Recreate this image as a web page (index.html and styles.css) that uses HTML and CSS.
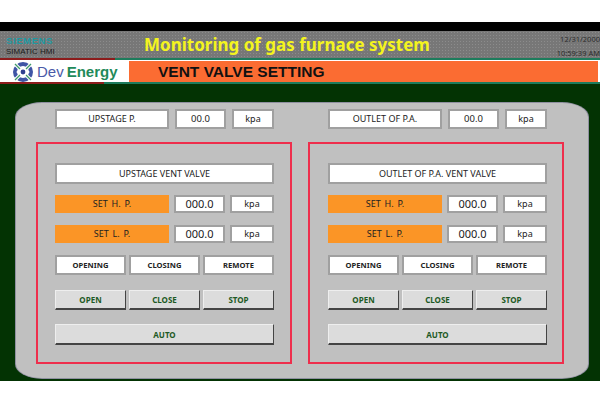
FILE: index.html
```html
<!DOCTYPE html>
<html lang="en">
<head>
  <meta charset="UTF-8">
  <title>Vent Valve Setting</title>
  <link rel="stylesheet" href="styles.css">
</head>
<body>
  <div class="screen">
    <div class="black-bar"></div>
    <div class="header">
      <div class="brand">
        <div class="siemens">SIEMENS</div>
        <div class="simatic">SIMATIC HMI</div>
      </div>
      <div class="title">Monitoring of gas furnace system</div>
      <div class="clock">
        <div>12/31/2000</div>
        <div>10:59:39 AM</div>
      </div>
    </div>
    <div class="rule rule-top"></div>
    <div class="nav">
      <div class="logo">
        <svg class="logo-icon" width="22" height="20" viewBox="0 0 22 20">
          <circle cx="11" cy="10" r="8" fill="none" stroke="#3f55a5" stroke-width="4"/>
          <path d="M2 1 L20 19 M20 1 L2 19" stroke="#fff" stroke-width="3.4"/>
          <path d="M3 2 L8 7 M19 2 L14 7 M3 18 L8 13 M19 18 L14 13" stroke="#3f9a6a" stroke-width="1.3"/>
          <circle cx="11" cy="10" r="2.4" fill="#2f3f8f"/>
          <circle cx="5.5" cy="10" r="1" fill="#fff"/>
          <circle cx="16.5" cy="10" r="1" fill="#fff"/>
        </svg>
        <span class="dev">Dev</span>
        <span class="energy">Energy</span>
      </div>
      <div class="page-name">VENT VALVE SETTING</div>
    </div>
    <div class="rule rule-bottom"></div>
    <div class="main">
      <div class="panel">
        <div class="summary-row">
          <div class="summary">
            <div class="field">UPSTAGE P.</div>
            <div class="field value">00.0</div>
            <div class="field">kpa</div>
          </div>
          <div class="summary">
            <div class="field">OUTLET OF P.A.</div>
            <div class="field value">00.0</div>
            <div class="field">kpa</div>
          </div>
        </div>
        <div class="groups">
          <div class="group">
            <div class="field heading">UPSTAGE VENT VALVE</div>
            <div class="set-row">
              <div class="set-label">SET H. P.</div>
              <div class="field number">000.0</div>
              <div class="field">kpa</div>
            </div>
            <div class="set-row">
              <div class="set-label">SET L. P.</div>
              <div class="field number">000.0</div>
              <div class="field">kpa</div>
            </div>
            <div class="three status-row">
              <div class="field status">OPENING</div>
              <div class="field status">CLOSING</div>
              <div class="field status">REMOTE</div>
            </div>
            <div class="three command-row">
              <button class="command">OPEN</button>
              <button class="command">CLOSE</button>
              <button class="command">STOP</button>
            </div>
            <button class="command auto">AUTO</button>
          </div>
          <div class="group">
            <div class="field heading">OUTLET OF P.A. VENT VALVE</div>
            <div class="set-row">
              <div class="set-label">SET H. P.</div>
              <div class="field number">000.0</div>
              <div class="field">kpa</div>
            </div>
            <div class="set-row">
              <div class="set-label">SET L. P.</div>
              <div class="field number">000.0</div>
              <div class="field">kpa</div>
            </div>
            <div class="three status-row">
              <div class="field status">OPENING</div>
              <div class="field status">CLOSING</div>
              <div class="field status">REMOTE</div>
            </div>
            <div class="three command-row">
              <button class="command">OPEN</button>
              <button class="command">CLOSE</button>
              <button class="command">STOP</button>
            </div>
            <button class="command auto">AUTO</button>
          </div>
        </div>
      </div>
    </div>
  </div>
</body>
</html>
```

FILE: styles.css
```css
body {
  margin: 0;
  background-color: white;
  font-family: "Noto Sans", sans-serif;
  color: #222;
}
.screen {
  margin-top: 22px;
  width: 600px;
  height: 359px;
  display: flex;
  flex-direction: column;
}
.black-bar {
  height: 9px;
  background-color: #000;
}
.header {
  height: 27px;
  display: flex;
  align-items: center;
  background-color: #777;
  background-image: radial-gradient(#8c8c8c 0.7px, transparent 0.8px);
  background-size: 3px 3px;
}
.brand {
  width: 144px;
  padding-left: 6px;
  padding-top: 2px;
  box-sizing: border-box;
}
.siemens {
  font-family: "Liberation Sans", sans-serif;
  font-size: 9.5px;
  font-weight: bold;
  letter-spacing: 0.6px;
  line-height: 12px;
  color: #1f9aa3;
}
.simatic {
  font-family: "Liberation Sans", sans-serif;
  font-size: 8px;
  line-height: 10px;
  color: #1c1c1c;
}
.title {
  width: 300px;
  font-size: 17px;
  font-weight: bold;
  color: #f4f41e;
  white-space: nowrap;
}
.clock {
  flex: 1;
  padding-top: 3px;
  text-align: right;
  font-size: 7.5px;
  line-height: 14px;
  color: #2c2c2c;
  white-space: nowrap;
}
.rule {
  height: 2px;
}
.rule-top {
  background: linear-gradient(to right, #8c1c1c 115px, #1d7c5c 115px);
  margin-bottom: 1px;
}
.nav {
  height: 21px;
  display: flex;
  background-color: white;
}
.logo {
  width: 129px;
  display: flex;
  align-items: center;
  padding-left: 12px;
  box-sizing: border-box;
  font-family: "Liberation Sans", sans-serif;
  font-size: 15px;
}
.logo-icon {
  margin-right: 3px;
}
.dev {
  color: #4a5aa8;
  margin-right: 3px;
}
.energy {
  color: #1f8a5a;
  font-weight: bold;
}
.page-name {
  flex: 1;
  margin-right: 2px;
  padding-left: 29px;
  background-color: #fb6c32;
  font-family: "Liberation Sans", sans-serif;
  font-size: 15.5px;
  font-weight: bold;
  line-height: 21px;
  color: #111;
}
.rule-bottom {
  background: linear-gradient(to right, #8c1c1c 104px, #1d7c5c 104px);
}
.main {
  flex: 1;
  background-color: #033303;
  padding: 19px 12px 3px 16px;
  min-height: 0;
  display: flex;
}
.panel {
  flex: 1;
  background-color: #c0c0c0;
  border-radius: 26px / 14px;
  box-shadow: 0 0 0 1px #8f8fa0;
  padding: 6px 0 0 20px;
  box-sizing: border-box;
}
.summary-row {
  display: flex;
}
.summary {
  width: 219px;
  margin-left: 19px;
  display: grid;
  grid-template-columns: 114px 51px 42px;
  column-gap: 6px;
}
.summary + .summary {
  margin-left: 54px;
}
.field {
  background-color: white;
  border: 2px solid #a0a0a0;
  box-sizing: border-box;
  height: 20px;
  line-height: 16px;
  text-align: center;
  font-size: 9px;
}
.value {
  font-size: 9.5px;
}
.groups {
  display: flex;
  gap: 16px;
  margin-top: 13px;
}
.group {
  width: 256px;
  height: 222px;
  box-sizing: border-box;
  border: 2px solid #ee2e4c;
  padding: 19px 16px 0 17px;
}
.group + .group {
  padding-left: 18px;
  padding-right: 15px;
}
.heading {
  height: 21px;
  line-height: 17px;
  margin-bottom: 11px;
}
.set-row {
  display: grid;
  grid-template-columns: 114px 51px 44px;
  column-gap: 5px;
  margin-bottom: 12px;
}
.set-row .field {
  height: 18px;
  line-height: 14px;
}
.set-label {
  height: 18px;
  line-height: 18px;
  background-color: #fb9526;
  text-align: center;
  font-size: 9px;
  word-spacing: 1.5px;
}
.set-row .number {
  font-size: 11px;
}
.three {
  display: grid;
  grid-template-columns: repeat(3, 1fr);
  column-gap: 3px;
}
.status-row {
  margin-bottom: 15px;
}
.status {
  font-weight: bold;
  font-size: 7.6px;
}
.command-row {
  margin-bottom: 14px;
}
.command {
  height: 20px;
  padding: 0;
  background-color: #dcdcdc;
  border: none;
  border-top: 1px solid #eee;
  border-left: 1px solid #eee;
  border-right: 1px solid #444;
  border-bottom: 2px solid #444;
  font-family: "Noto Sans", sans-serif;
  font-size: 8px;
  font-weight: bold;
  color: #1d5a24;
}
.auto {
  display: block;
  width: 100%;
  height: 21px;
}
```
